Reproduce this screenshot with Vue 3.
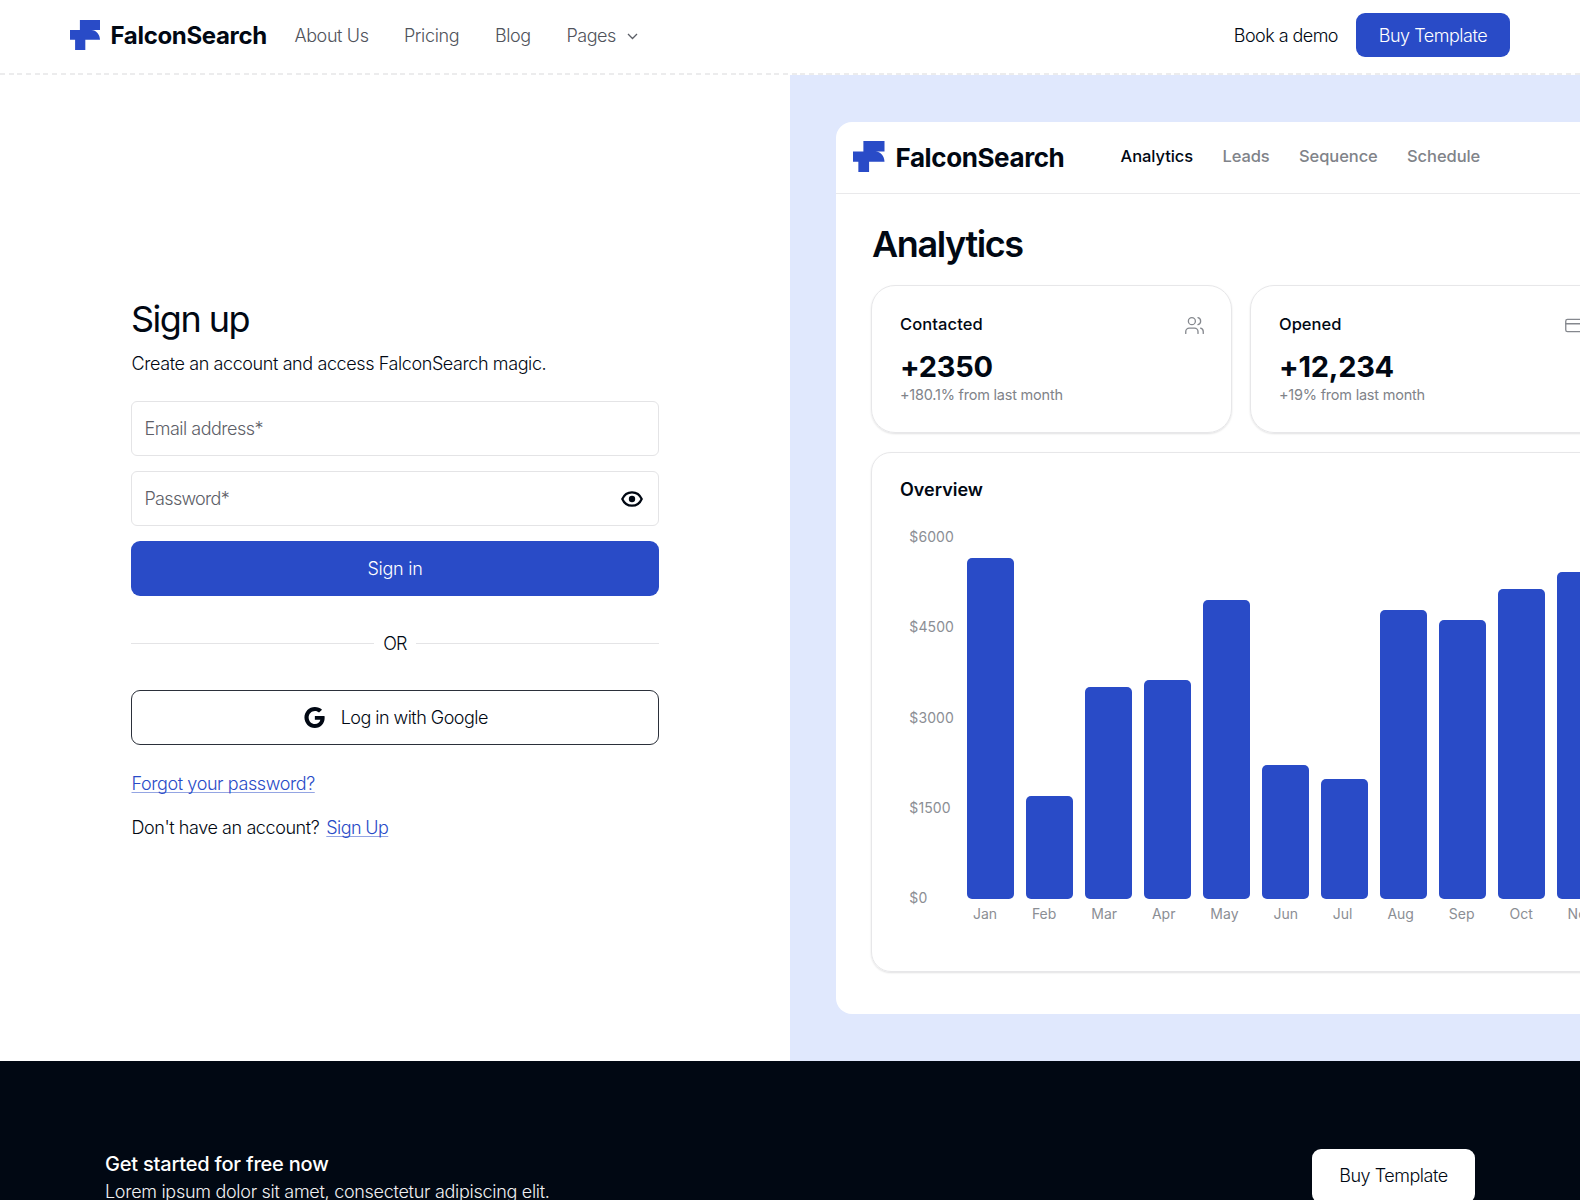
<script setup>
const links = [
  { label: 'About Us', cls: 'about' },
  { label: 'Pricing', cls: 'pricing' },
  { label: 'Blog', cls: 'blog' },
]
const ticks = ['$6000', '$4500', '$3000', '$1500', '$0']
const months = [
  { name: 'Jan', height: 341 },
  { name: 'Feb', height: 102.3 },
  { name: 'Mar', height: 211.5 },
  { name: 'Apr', height: 218.7 },
  { name: 'May', height: 298.7 },
  { name: 'Jun', height: 134 },
  { name: 'Jul', height: 120 },
  { name: 'Aug', height: 288.2 },
  { name: 'Sep', height: 278.7 },
  { name: 'Oct', height: 309.2 },
  { name: 'Nov', height: 327 },
]
const logoPath = 'M31 0H94V31H67C82 31 94 45 94 62H48V94H16V62H0V31H31Z'
</script>

<template>
  <div class="page">
    <header class="topbar">
      <a class="brand">
        <svg class="mark" viewBox="0 0 94 94"><path :d="logoPath" fill="#294bc7" /></svg>
        <span>FalconSearch</span>
      </a>
      <nav class="links">
        <a v-for="l in links" :key="l.label" :class="l.cls">{{ l.label }}</a>
        <a class="pages">
          <span>Pages</span>
          <svg width="11" height="7" viewBox="0 0 11 7"><path d="M1 1l4.5 4.5L10 1" fill="none" stroke="#5b5e66" stroke-width="1.3" /></svg>
        </a>
      </nav>
      <div class="actions">
        <a class="demo">Book a demo</a>
        <button class="buy">Buy Template</button>
      </div>
    </header>

    <main class="split">
      <section class="form-side">
        <h1 class="heading">Sign up</h1>
        <p class="lead">Create an account and access FalconSearch magic.</p>
        <div class="fields">
          <div class="field"><span class="ph email">Email address*</span></div>
          <div class="field">
            <span class="ph password">Password*</span>
            <svg class="eye" viewBox="0 0 22 16">
              <path d="M11 1.3C15.6 1.3 19 4 20.7 8C19 12 15.6 14.7 11 14.7S3 12 1.3 8C3 4 6.4 1.3 11 1.3Z" fill="none" stroke="#010813" stroke-width="2.2" />
              <circle cx="11" cy="8" r="3.2" fill="#010813" />
            </svg>
          </div>
          <button class="submit">Sign in</button>
        </div>
        <div class="or"><span>OR</span></div>
        <button class="google">
          <svg class="g" viewBox="0 0 24 24"><path d="M12.4 0C5.7 0 .5 5.4.5 12s5.2 12 11.9 12C19.2 24 23.6 19.2 23.6 12.4c0-.8-.1-1.5-.2-2.1H12.4v4.4h6.3c-.5 2.8-2.9 4.8-6.2 4.8-4 0-7.2-3.3-7.2-7.5s3.2-7.5 7.2-7.500c1.900 0 3.500.7 4.700 1.800l3.400-3.300C18.500 1.100 15.700 0 12.400 0z" fill="#010813" /></svg>
          <span>Log in with Google</span>
        </button>
        <a class="link forgot">Forgot your password?</a>
        <p class="alt">Don't have an account?<a class="link signup">Sign Up</a></p>
      </section>

      <section class="preview-side">
        <div class="preview">
          <div class="preview-head">
            <div class="brand big">
              <svg class="mark" viewBox="0 0 94 94"><path :d="logoPath" fill="#294bc7" /></svg>
              <span>FalconSearch</span>
            </div>
            <nav class="tabs">
              <a class="active">Analytics</a>
              <a>Leads</a>
              <a>Sequence</a>
              <a>Schedule</a>
            </nav>
          </div>
          <div class="preview-body">
            <h2 class="title">Analytics</h2>
            <div class="stats">
              <article class="stat">
                <div class="stat-top">
                  <h3>Contacted</h3>
                  <svg class="ico" viewBox="0 0 24 24"><path d="M16 21v-2a4 4 0 0 0-4-4H6a4 4 0 0 0-4 4v2M22 21v-2a4 4 0 0 0-3-3.87M16 3.13a4 4 0 0 1 0 7.75" /><circle cx="9" cy="7" r="4" /></svg>
                </div>
                <strong>+2350</strong>
                <small>+180.1% from last month</small>
              </article>
              <article class="stat">
                <div class="stat-top">
                  <h3 class="opened">Opened</h3>
                  <svg class="ico" viewBox="0 0 24 24"><rect x="2" y="5" width="20" height="14" rx="2" /><path d="M2 10h20" /></svg>
                </div>
                <strong>+12,234</strong>
                <small>+19% from last month</small>
              </article>
            </div>
            <article class="overview">
              <h3>Overview</h3>
              <div class="chart">
                <div class="ticks"><span v-for="t in ticks" :key="t">{{ t }}</span></div>
                <div class="plot">
                  <div class="bars">
                    <i v-for="m in months" :key="m.name" :style="{ height: m.height + 'px' }"></i>
                  </div>
                  <div class="months"><span v-for="m in months" :key="m.name">{{ m.name }}</span></div>
                </div>
              </div>
            </article>
          </div>
        </div>
      </section>
    </main>

    <footer class="footer">
      <div>
        <h4>Get started for free now</h4>
        <p>Lorem ipsum dolor sit amet, consectetur adipiscing elit.</p>
      </div>
      <button class="buy-light">Buy Template</button>
    </footer>
  </div>
</template>

<style>
html, body { margin: 0; overflow: hidden; background: #fff; }
</style>

<style scoped>
* { box-sizing: border-box; }
.page {
  width: 1580px;
  height: 1200px;
  overflow: hidden;
  display: flex;
  flex-direction: column;
  font-family: Inter, sans-serif;
  font-size: 18px;
  font-weight: 300;
  line-height: 24px;
  letter-spacing: -0.47px;
  color: #010813;
  white-space: nowrap;
}
h1, h2, h3, h4, p { margin: 0; }
svg { display: block; flex: none; }
button {
  font: inherit;
  letter-spacing: inherit;
  padding: 1px 0 0;
  border: 0;
  border-radius: 9px;
  color: #fff;
  background: #294bc7;
}

.topbar {
  position: relative;
  flex: none;
  height: 75px;
  padding: 0 70px 5px;
  display: flex;
  align-items: center;
}
.topbar::after {
  content: '';
  position: absolute;
  inset: auto 0 0;
  height: 2px;
  background: repeating-linear-gradient(90deg, #ececed 0 5px, #fff 5px 8.7px);
}
.brand {
  display: flex;
  align-items: center;
  gap: 10.5px;
  font-size: 24px;
  font-weight: 700;
  letter-spacing: -0.33px;
}
.brand span { padding-top: 2px; }
.mark { width: 30px; height: 30px; }
.links { display: flex; align-items: center; margin-left: 27.5px; padding-top: 2px; color: #50535b; }
.about { width: 109.5px; letter-spacing: -0.38px; }
.pricing { width: 91px; letter-spacing: -0.37px; }
.blog { width: 71.5px; letter-spacing: -0.4px; }
.pages { display: flex; align-items: center; gap: 11.5px; }
.actions { margin-left: auto; display: flex; align-items: center; gap: 18px; }
.demo { padding-top: 2px; letter-spacing: -0.54px; }
.buy { width: 154px; height: 44px; }

.split { flex: none; height: 986px; display: flex; }
.form-side { width: 790px; padding: 221.6px 131px 0; }
.heading { font-size: 36px; line-height: 44px; font-weight: 400; letter-spacing: -1.5px; }
.lead { margin-top: 11.4px; padding-left: 0.5px; letter-spacing: -0.4px; }
.fields { margin-top: 25px; display: flex; flex-direction: column; gap: 15.2px; }
.field {
  height: 55px;
  padding: 1px 15px 0 12.5px;
  display: flex;
  align-items: center;
  justify-content: space-between;
  border: 1px solid #e4e4e6;
  border-radius: 6px;
}
.ph { color: #5d6068; letter-spacing: -0.5px; }
.password { letter-spacing: -0.7px; }
.eye { width: 22px; height: 16px; }
.submit { height: 55px; letter-spacing: -0.25px; }
.or { margin-top: 34.5px; display: flex; align-items: center; gap: 9px; letter-spacing: -0.8px; }
.or span { padding-top: 1px; }
.or::before, .or::after { content: ''; flex: 1; height: 1px; background: #e4e4e6; }
.google {
  margin-top: 34.5px;
  width: 528px;
  height: 55px;
  display: flex;
  align-items: center;
  justify-content: center;
  gap: 15.5px;
  padding: 1px 0 0 2px;
  color: #010813;
  background: #fff;
  border: 1px solid #2b303a;
  letter-spacing: -0.53px;
}
.g { width: 21px; height: 21px; margin-top: -1px; }
.link {
  color: #294bc7;
  text-decoration: underline 1px #94a5e3;
  text-underline-offset: 2px;
  text-decoration-skip-ink: none;
}
.forgot { display: block; width: fit-content; margin: 27px 0 0 0.5px; letter-spacing: -0.4px; }
.alt { margin-top: 20px; padding-left: 0.5px; letter-spacing: -0.42px; }
.signup { margin-left: 7px; letter-spacing: -0.6px; }

.preview-side { width: 790px; padding: 47px 0 47px 46px; background: #e0e8fd; overflow: hidden; }
.preview { width: 820px; height: 892px; background: #fff; border-radius: 16px; }
.preview-head {
  height: 72px;
  padding: 0 0 2px 17px;
  display: flex;
  align-items: center;
  border-bottom: 1px solid #e9e9eb;
}
.big { gap: 11px; width: 267.5px; font-size: 26px; letter-spacing: -0.4px; }
.big .mark { width: 31.5px; height: 31.5px; }
.tabs {
  display: flex;
  gap: 29.3px;
  padding-bottom: 2px;
  font-size: 16.5px;
  font-weight: 500;
  letter-spacing: -0.07px;
  color: #808389;
}
.active { color: #010813; }
.preview-body { padding: 28px 0 0 35px; }
.title { padding-left: 1px; font-size: 36px; line-height: 44px; font-weight: 600; letter-spacing: -1.4px; }
.stats { margin-top: 19px; display: flex; gap: 18px; }
.stat, .overview { border: 1.5px solid #e7e7e9; box-shadow: 0 1px 2px rgba(1, 8, 19, 0.12); }
.stat {
  flex: none;
  width: 361px;
  height: 148px;
  padding: 28px 26px 0 28px;
  border-radius: 24px;
  display: flex;
  flex-direction: column;
}
.stat-top { display: flex; justify-content: space-between; align-items: center; height: 20px; }
h3 { font-size: 16.5px; line-height: 20px; font-weight: 500; letter-spacing: 0.1px; }
.opened { letter-spacing: 0; }
.stat:last-child .ico { margin-right: -1px; }
.ico { width: 21px; height: 21px; margin-top: 3px; fill: none; stroke: #85888e; stroke-width: 1.5; stroke-linecap: round; }
strong { margin-top: 15.5px; font-size: 29px; line-height: 34px; font-weight: 700; letter-spacing: -0.25px; }
small { margin-top: 1.5px; font-size: 14.5px; line-height: 20px; font-weight: 400; letter-spacing: -0.22px; color: #808389; }
.overview { margin-top: 18.5px; width: 740px; height: 520px; padding: 25px 0 0 28px; border-radius: 20px; }
.overview h3 { font-size: 18px; line-height: 24px; font-weight: 600; letter-spacing: 0; }
.chart {
  margin-top: 26.5px;
  padding-left: 9.3px;
  display: flex;
  font-size: 14px;
  line-height: 18px;
  font-weight: 400;
  letter-spacing: 0;
  color: #8b8e94;
}
.ticks { width: 57.3px; height: 379px; display: flex; flex-direction: column; justify-content: space-between; letter-spacing: 0.1px; }
.bars { height: 370.5px; display: flex; align-items: flex-end; gap: 11.5px; }
.bars i { flex: none; width: 47.5px; border-radius: 5px; background: #294bc7; }
.months { margin-top: 6px; padding-left: 6.3px; display: flex; gap: 34.9px; }

.footer {
  flex: 1;
  padding: 88px 105px 0;
  display: flex;
  justify-content: space-between;
  align-items: flex-start;
  color: #fff;
  background: #010813;
}
h4 { padding-top: 1px; font-size: 20px; line-height: 28px; font-weight: 500; letter-spacing: -0.2px; }
.footer p { line-height: 28px; letter-spacing: -0.29px; color: #f0f0f2; }
.buy-light { width: 163px; height: 54px; padding: 0; color: #010813; background: #fff; }
</style>
